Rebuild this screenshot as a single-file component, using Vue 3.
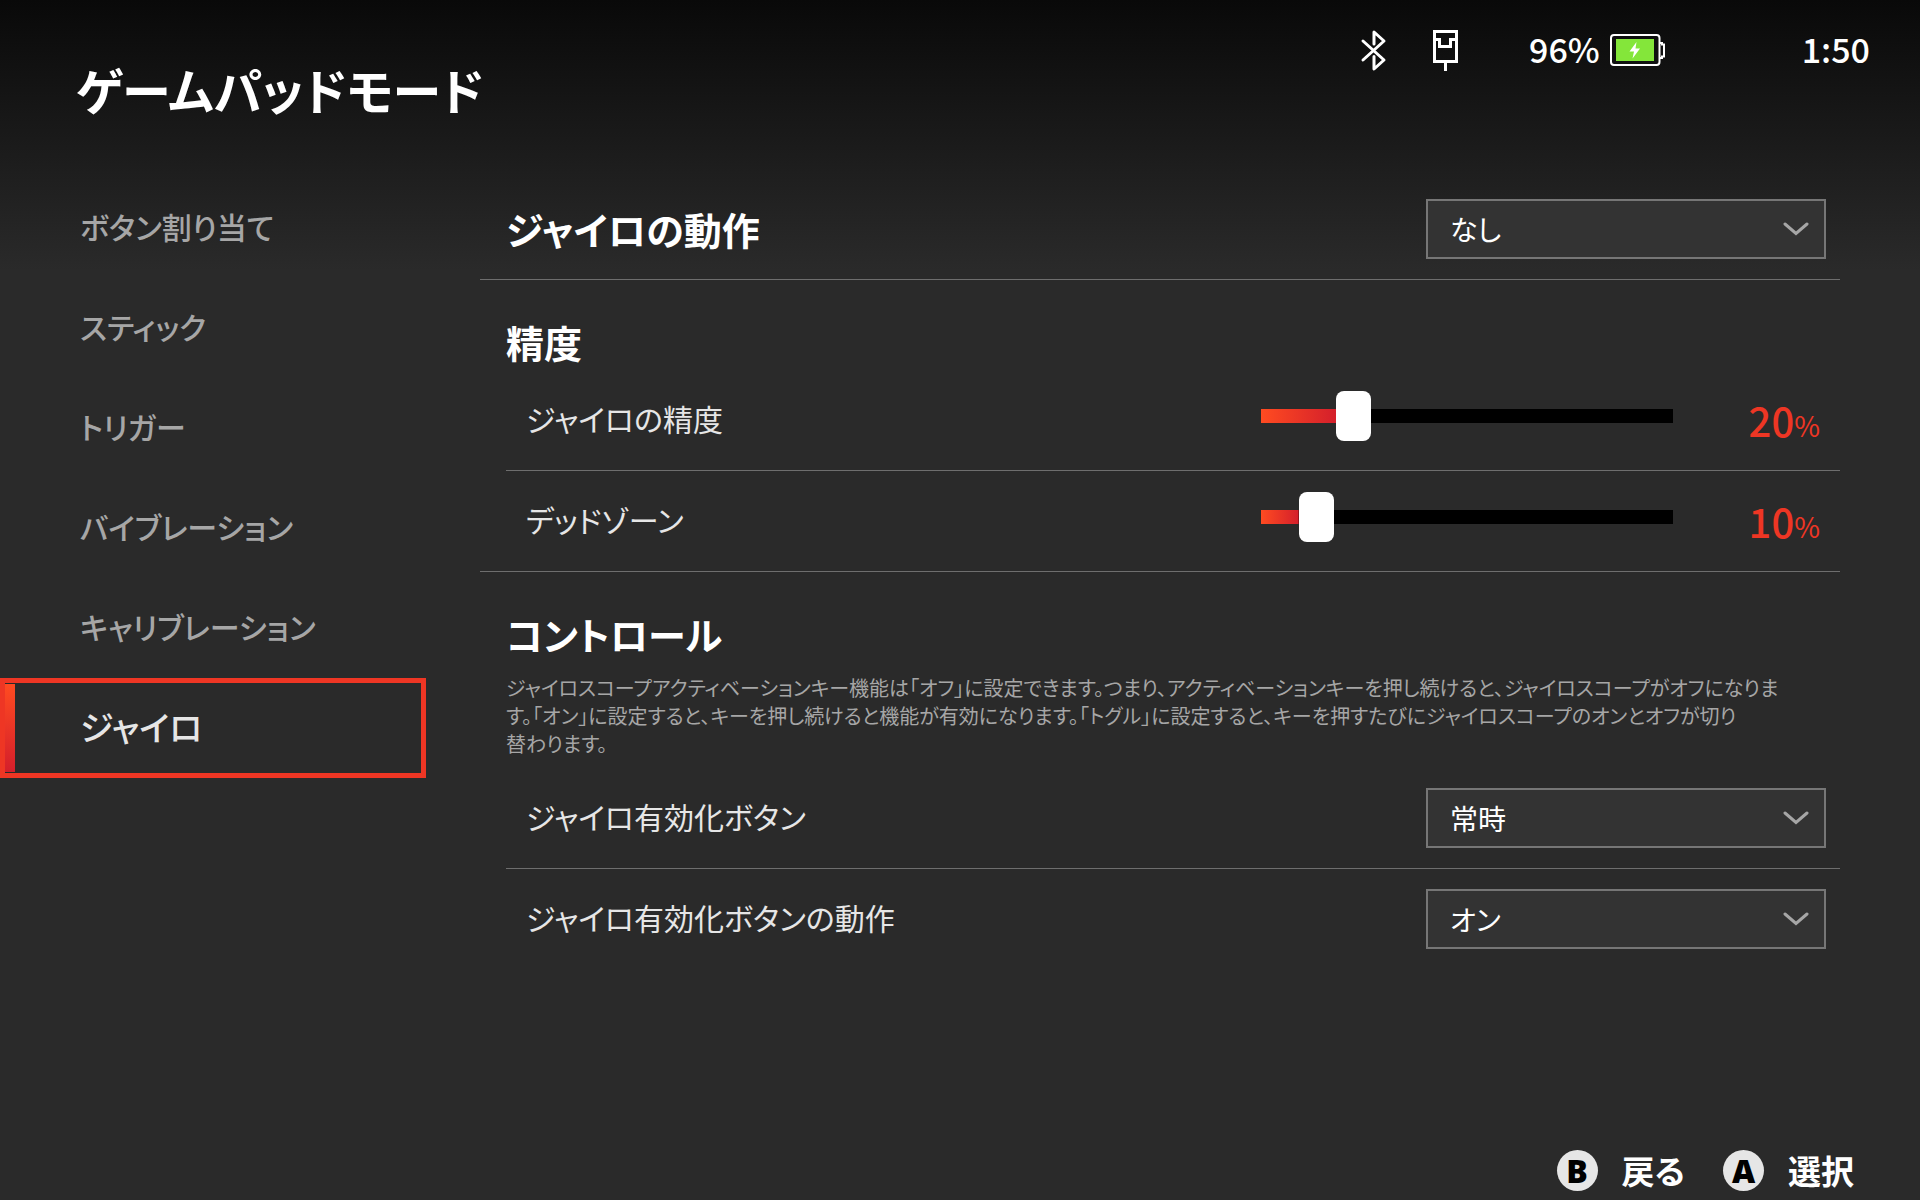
<template>
  <div class="screen">
    <header class="header">
      <h1>ゲームパッドモード</h1>
      <div class="status">
        <svg class="bluetooth" width="28" height="44" viewBox="0 0 28 44">
          <path d="M3 13 24 32 14 41V28.500M14 16V4l10 9L3 32" />
        </svg>
        <svg class="port" width="28" height="44" viewBox="0 0 28 44">
          <path d="M3.500 3.500h22v30h-22zM3.500 11.500h5v7h11v-7h6M14.500 33.500V43" />
        </svg>
        <div class="battery">
          <span>96%</span>
          <svg width="56" height="34" viewBox="0 0 56 34">
            <rect class="line" x="1" y="2" width="48.500" height="30" rx="3" />
            <path class="line" d="M49.500 10h2.500v1.500h2v12h-2V25h-2.500" />
            <rect class="level" x="6" y="6" width="38" height="22" />
            <path class="bolt" d="M26.500 9 19.500 18.500H24L22.500 25.500 30 15.500H25.500z" />
          </svg>
        </div>
        <time>1:50</time>
      </div>
    </header>

    <div class="body">
      <nav class="menu">
        <button
          v-for="t in tabs"
          :key="t"
          :class="{ active: t === currentTab }"
          @click="currentTab = t"
          type="button"
        >
          {{ t }}
        </button>
      </nav>

      <main class="content">
        <section>
          <div class="row">
            <h2><label for="action">ジャイロの動作</label></h2>
            <div class="dropdown">
              <select id="action" v-model="action">
                <option v-for="o in actions" :key="o" :value="o">{{ o }}</option>
              </select>
              <svg width="26" height="14" viewBox="0 0 26 14"><path d="M2 2l11 9.500L24 2" /></svg>
            </div>
          </div>
        </section>

        <section>
          <h2 class="heading">精度</h2>
          <div v-for="s in sliders" :key="s.id" class="row sub">
            <label :for="s.id">{{ s.label }}</label>
            <input
              :id="s.id"
              v-model.number="s.value"
              type="range"
              min="0"
              max="100"
              :style="{ '--level': s.value / 100 }"
            />
            <output :for="s.id">{{ s.value }}<small>%</small></output>
          </div>
        </section>

        <section>
          <h2 class="heading">コントロール</h2>
          <p class="hint">
            ジャイロスコープアクティベーションキー機能は「オフ」に設定できます。つまり、アクティベーションキーを押し続けると、ジャイロスコープがオフになりま<br />す。「オン」に設定すると、キーを押し続けると機能が有効になります。「トグル」に設定すると、キーを押すたびにジャイロスコープのオンとオフが切り<br />替わります。
          </p>
          <div v-for="c in controls" :key="c.id" class="row sub">
            <label :for="c.id">{{ c.label }}</label>
            <div class="dropdown">
              <select :id="c.id" v-model="c.value">
                <option v-for="o in c.options" :key="o" :value="o">{{ o }}</option>
              </select>
              <svg width="26" height="14" viewBox="0 0 26 14"><path d="M2 2l11 9.500L24 2" /></svg>
            </div>
          </div>
        </section>
      </main>
    </div>

    <footer class="footer">
      <button type="button"><span class="key">B</span>戻る</button>
      <button type="button"><span class="key">A</span>選択</button>
    </footer>
  </div>
</template>

<script setup>
import { ref } from "vue"

const tabs = ["ボタン割り当て", "スティック", "トリガー", "バイブレーション", "キャリブレーション", "ジャイロ"]
const currentTab = ref("ジャイロ")

const actions = ["なし", "マウス", "右スティック"]
const action = ref("なし")

const sliders = ref([
  { id: "accuracy", label: "ジャイロの精度", value: 20 },
  { id: "deadzone", label: "デッドゾーン", value: 10 }
])

const controls = ref([
  { id: "enable-button", label: "ジャイロ有効化ボタン", value: "常時", options: ["常時", "A", "B"] },
  { id: "enable-mode", label: "ジャイロ有効化ボタンの動作", value: "オン", options: ["オン", "オフ", "トグル"] }
])
</script>

<style>
body { margin:0; background:#2a2a2a; }
</style>

<style scoped>
.screen, .screen * { box-sizing:border-box; }
.screen {
  display:flex;
  flex-direction:column;
  min-height:100vh;
  color:#fff;
  background:linear-gradient(180deg,#090909 0,#2a2a2a 270px);
  font-family:"Noto Sans CJK JP",sans-serif;
  font-feature-settings:"palt";
}
button, select { font:inherit; font-feature-settings:inherit; color:inherit; }
h1, h2, p { margin:0; }

.header {
  display:flex;
  justify-content:space-between;
  align-items:flex-start;
  height:178px;
  padding:0 50px 0 76px;
}
h1 { padding-top:53px; font-size:49px; line-height:72px; font-weight:600; }
.status {
  display:flex;
  align-items:center;
  height:100px;
  font-size:34px;
  font-weight:500;
}
.status span, .status time { line-height:48px; padding-bottom:2px; }
.status path, .line { fill:none; stroke:#fff; stroke-width:3; }
.bluetooth path { stroke-linejoin:round; stroke-linecap:round; }
.status .line { stroke-width:2; }
.status .level { fill:#84e63a; }
.status .bolt { fill:#fff; stroke:none; }
.port { margin-left:43px; }
.battery { display:flex; align-items:center; gap:10px; margin:0 136px 0 70px; }

.body { display:flex; gap:54px; padding-right:80px; }
.menu { flex:none; width:426px; }
.menu button {
  display:block;
  width:100%;
  height:100px;
  padding:0 0 4px 75px;
  border:5px solid transparent;
  background:none;
  color:#a6a6a6;
  font-size:30px;
  font-weight:500;
  text-align:left;
  cursor:pointer;
}
.menu button.active {
  border-color:#ee3624;
  background:linear-gradient(180deg,#ff4b21,#d41f2b) 0 1px / 10px 88px no-repeat padding-box;
  color:#e6e6e6;
  font-size:34px;
}

.content { flex:1; min-width:0; padding-top:1px; }
section { padding-left:26px; border-bottom:1px solid #6e6e6e; }
section:last-child { border-bottom:none; }
h2 { font-size:38px; line-height:52px; font-weight:600; }
.heading { padding-top:36px; margin-bottom:2px; }
.row {
  display:flex;
  align-items:center;
  justify-content:space-between;
  height:100px;
  padding-right:14px;
}
.row.sub { padding-left:20px; color:#e6e6e6; font-size:30px; }
.row.sub label { padding-bottom:4px; }
.row.sub + .row.sub { border-top:1px solid #6e6e6e; height:101px; }
.hint { margin:14px 0 10px; color:#a6a6a6; font-size:20px; line-height:28px; white-space:nowrap; }

.dropdown { position:relative; width:400px; }
.dropdown select {
  display:block;
  width:100%;
  height:60px;
  padding:0 60px 0 22px;
  border:2px solid #767676;
  border-radius:0;
  background:#333;
  color:#fff;
  font-size:28px;
  appearance:none;
}
.dropdown svg { position:absolute; right:17px; top:23px; pointer-events:none; }
.dropdown path { fill:none; stroke:#a6a6a6; stroke-width:3; stroke-linecap:round; }

input[type="range"] {
  width:412px;
  height:50px;
  margin:0 0 8px auto;
  background:none;
  appearance:none;
}
input[type="range"]::-webkit-slider-runnable-track {
  height:14px;
  background:linear-gradient(90deg,#ff4b21,#d41f2b) 0 0 / calc((100% - 35px) * var(--level)) 100% no-repeat #000;
}
input[type="range"]::-webkit-slider-thumb {
  width:35px;
  height:50px;
  margin-top:-18px;
  border-radius:8px;
  background:#fff;
  appearance:none;
}
output { width:153px; padding-right:6px; color:#ee3624; font-size:40px; font-weight:500; text-align:right; }
output small { font-size:28px; font-weight:400; }

.footer {
  display:flex;
  justify-content:flex-end;
  gap:38px;
  margin-top:auto;
  padding:0 66px 6px 0;
}
.footer button {
  display:flex;
  align-items:center;
  gap:24px;
  padding:0;
  border:none;
  background:none;
  font-size:33px;
  font-weight:600;
  cursor:pointer;
}
.key {
  width:41px;
  height:41px;
  border-radius:50%;
  background:#e6e6e6;
  color:#000;
  font:800 32px/41px "Open Sans",sans-serif;
  text-align:center;
}
</style>
